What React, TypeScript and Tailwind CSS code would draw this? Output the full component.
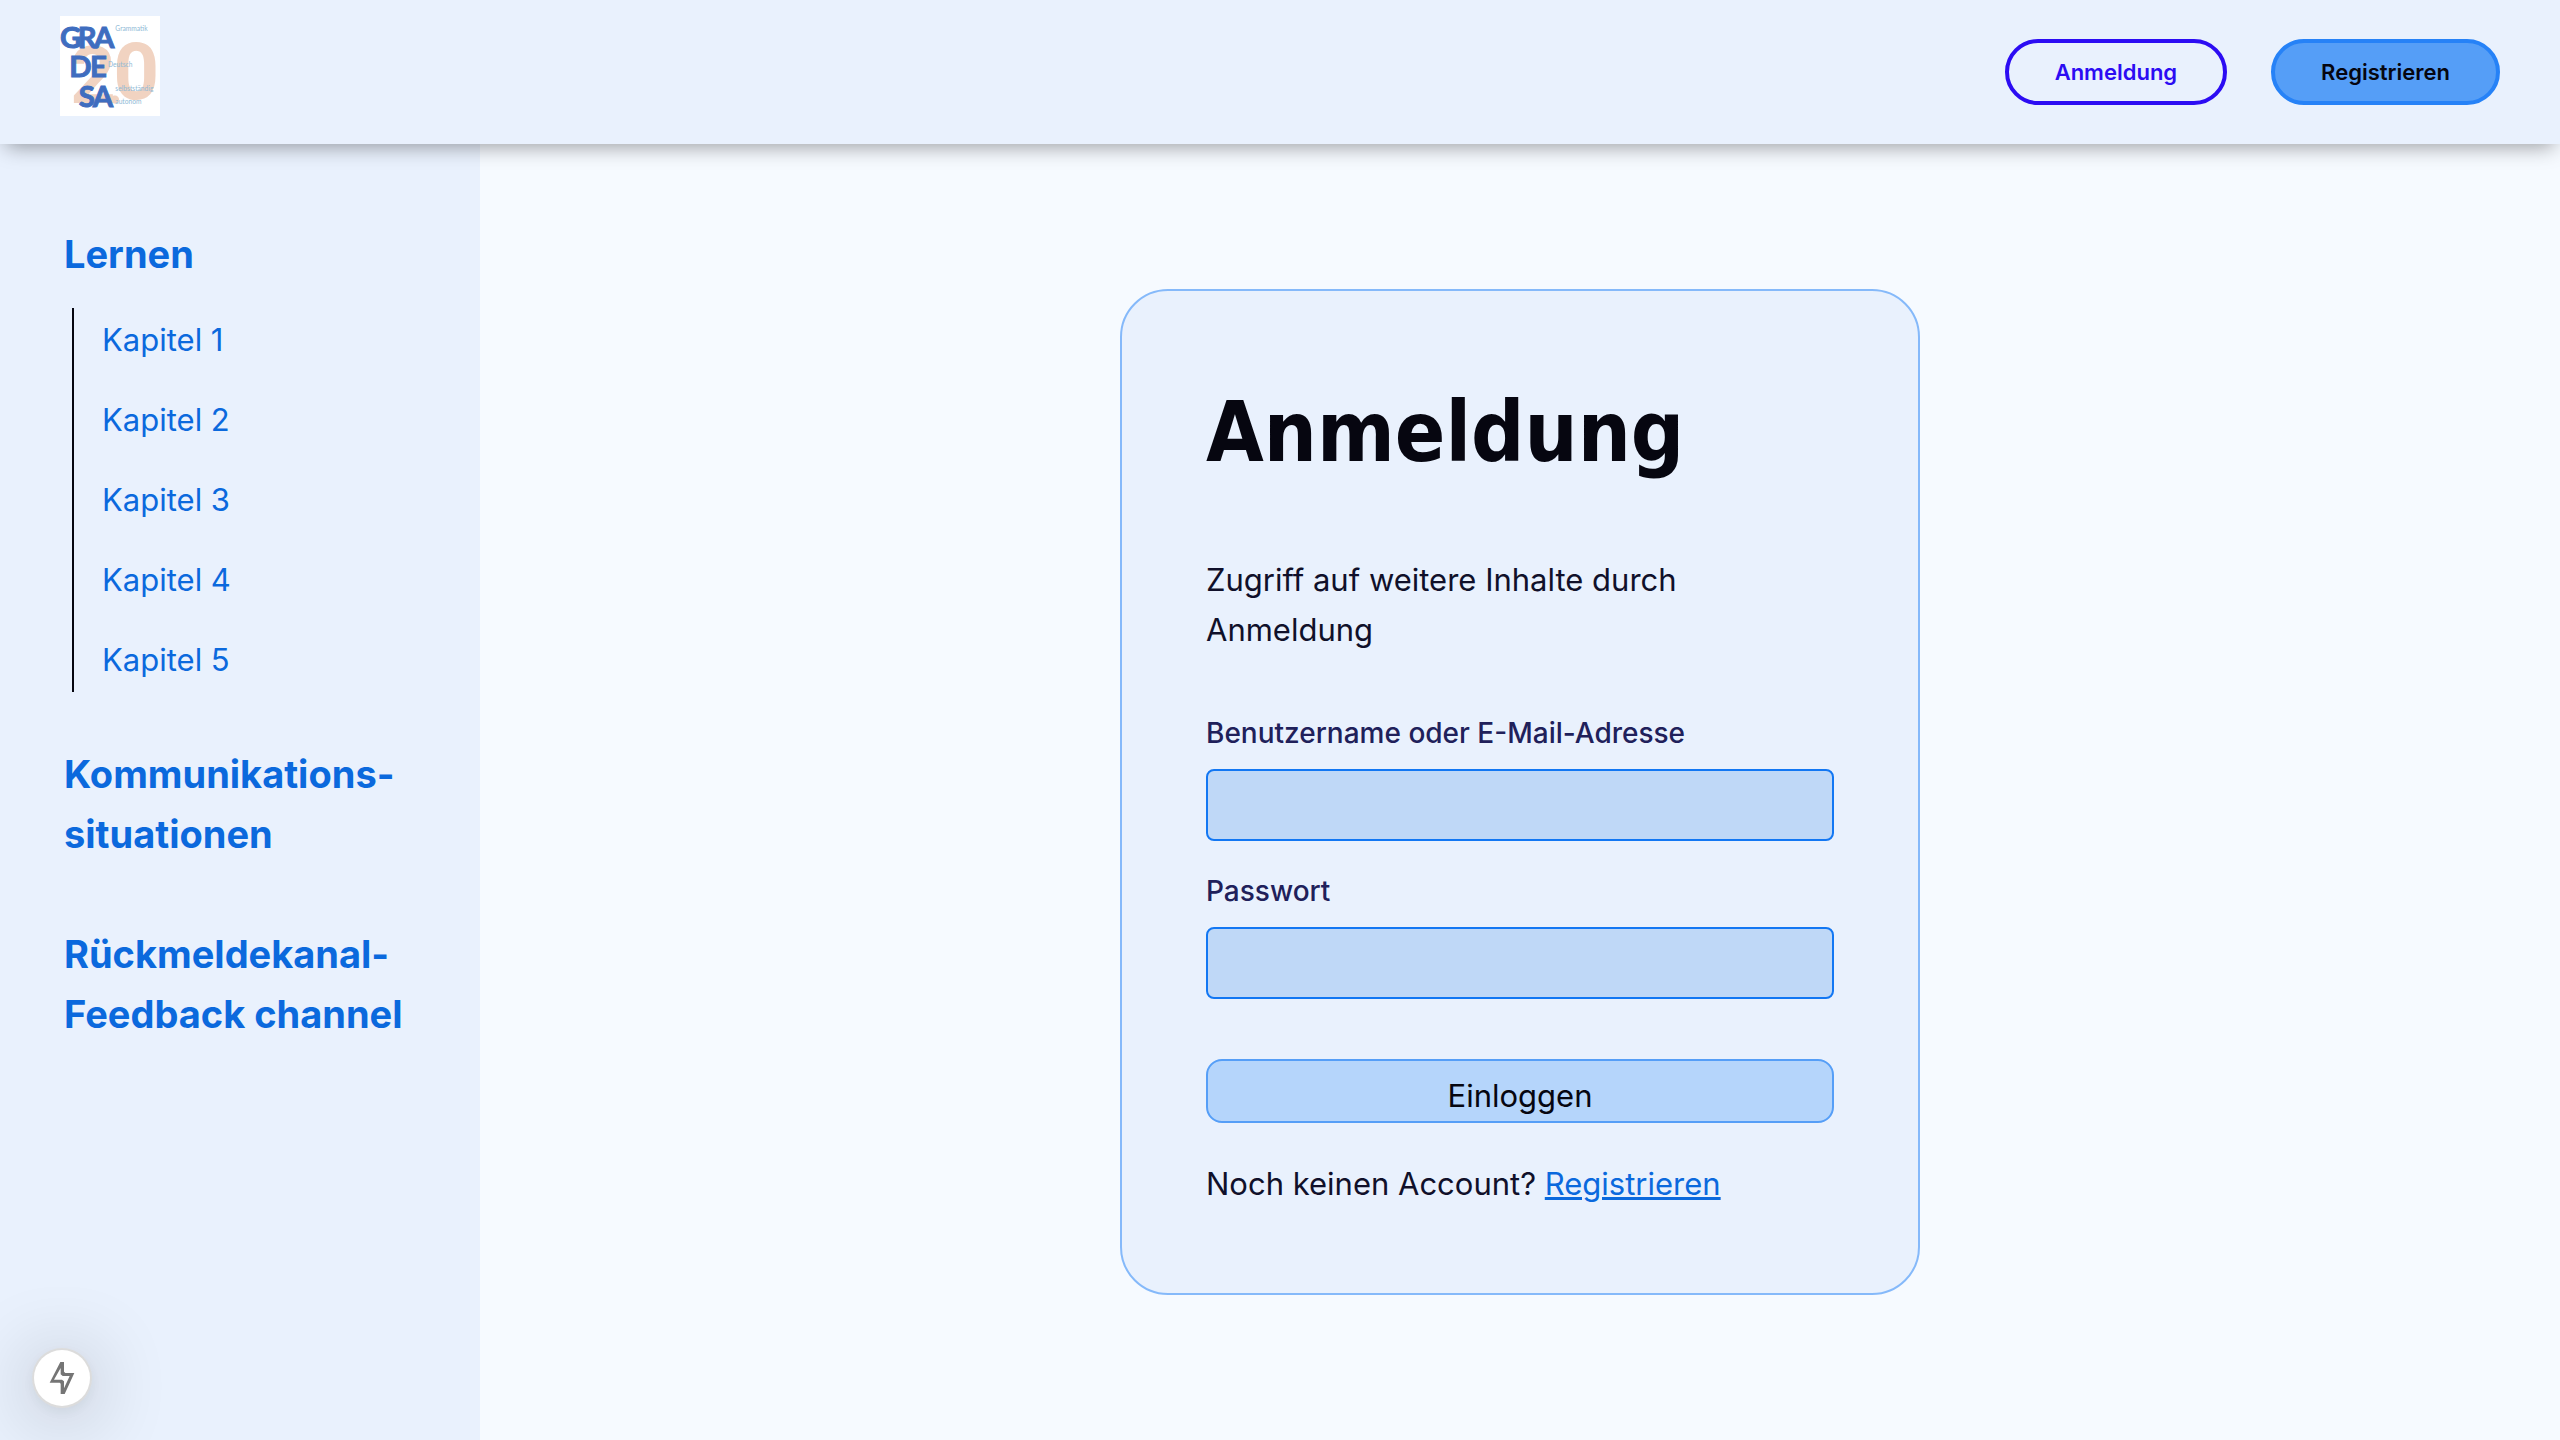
const chapters = ["Kapitel 1", "Kapitel 2", "Kapitel 3", "Kapitel 4", "Kapitel 5"];

function Logo() {
  return (
    <svg viewBox="0 0 300 300" role="img" aria-label="GRADESA 2.0" className="size-[100px] bg-white">
      <g fill="#f1d3c1" fontFamily="'Roboto', sans-serif" fontWeight="700" fontSize="240">
        <text x="30" y="262">2</text>
        <text x="142" y="262" fontSize="160">.</text>
        <text x="160" y="250">0</text>
      </g>
      <g fill="#8fb9d6" fontFamily="'Lato', sans-serif" fontSize="20">
        <text x="166" y="46">Grammatik</text>
        <text x="144" y="154">Deutsch</text>
        <text x="166" y="226">selbstständig</text>
        <text x="166" y="263">autonom</text>
      </g>
      <g
        fill="#3f6dbf"
        stroke="#3f6dbf"
        strokeWidth="3"
        fontFamily="'Lato', sans-serif"
        fontWeight="700"
        fontSize="88"
      >
        <text x="0 53 102" y="96">GRA</text>
        <text x="28 90" y="184">DE</text>
        <text x="56 98" y="272">SA</text>
      </g>
    </svg>
  );
}

function Header() {
  return (
    <header className="relative z-10 flex h-36 items-center justify-between bg-[#e9f1fd] px-[60px] shadow-[0_8px_20px_-6px_rgba(0,0,0,0.4)]">
      <a href="#start" className="mt-4 self-start">
        <Logo />
      </a>
      <div className="flex gap-11 text-[22px] leading-[30px] font-semibold">
        <button type="button" className="rounded-full border-4 border-[#2c0cf3] px-[46px] py-3.5 text-[#2c0cf3]">
          Anmeldung
        </button>
        <button
          type="button"
          className="rounded-full border-4 border-[#2682f7] bg-[#559ef7] px-[46px] py-3.5 text-[#060610]"
        >
          Registrieren
        </button>
      </div>
    </header>
  );
}

function Sidebar() {
  return (
    <nav className="w-[480px] shrink-0 bg-[#e9f1fd] px-16 pt-20 text-[#0b69dd]">
      <a href="#lernen" className="block text-[38px] leading-[60px] font-bold">
        Lernen
      </a>
      <ul className="mt-6 ml-2 flex flex-col gap-8 border-l-2 border-[#060610] py-2 pl-7 text-[31px] leading-[48px]">
        {chapters.map((chapter) => (
          <li key={chapter}>
            <a href="#kapitel">{chapter}</a>
          </li>
        ))}
      </ul>
      <a href="#kommunikation" className="mt-13 block text-[38px] leading-[60px] font-bold">
        Kommunikations-
        <br />
        situationen
      </a>
      <a href="#feedback" className="mt-15 block text-[38px] leading-[60px] font-bold whitespace-nowrap">
        Rückmeldekanal-
        <br />
        Feedback channel
      </a>
    </nav>
  );
}

function Field({ id, label, type }: { id: string; label: string; type: string }) {
  return (
    <div className="flex flex-col gap-3.5">
      <label htmlFor={id} className="text-[28px] leading-[44px] font-medium text-[#20205a]">
        {label}
      </label>
      <input
        id={id}
        type={type}
        className="h-[72px] w-full rounded-lg border-2 border-[#1277f3] bg-[#bfd8f7] px-4 text-[28px] outline-none"
      />
    </div>
  );
}

function LoginCard() {
  return (
    <form
      onSubmit={(event) => event.preventDefault()}
      className="w-[800px] rounded-[48px] border-2 border-[#85b9fa] bg-[#e9f1fd] px-[84px] pt-[92px] pb-[84px] text-[31px] leading-[50px] text-[#10102a]"
    >
      <h1 className="font-['DejaVu_Sans_Condensed',sans-serif] text-[83px] leading-[100px] font-bold text-[#060610]">
        Anmeldung
      </h1>
      <p className="mt-18">
        Zugriff auf weitere Inhalte durch
        <br />
        Anmeldung
      </p>
      <div className="mt-14 flex flex-col gap-7">
        <Field id="username" label="Benutzername oder E-Mail-Adresse" type="text" />
        <Field id="password" label="Passwort" type="password" />
      </div>
      <button
        type="submit"
        className="mt-15 block h-16 w-full rounded-2xl border-2 border-[#559ef7] bg-[#b5d5fb] pt-2.5 text-[#060610]"
      >
        Einloggen
      </button>
      <p className="mt-9">
        Noch keinen Account?{" "}
        <a href="#registrieren" className="text-[#0b69dd] underline">
          Registrieren
        </a>
      </p>
    </form>
  );
}

function DevIndicator() {
  return (
    <button
      type="button"
      aria-label="Entwicklerwerkzeuge"
      className="fixed bottom-[34px] left-[34px] z-20 flex size-14 items-center justify-center rounded-full bg-white shadow-[0_0_0_2px_#dcdcdc,0_4px_16px_rgba(0,0,0,0.08),0_8px_80px_rgba(0,0,0,0.32)]"
    >
      <svg viewBox="72 60 108 108" className="size-9" fill="#757575" fillRule="evenodd">
        <path d="M121 66H132V95L136 99H163L134 162H122V131L119 128H89ZM122 84V103L128 108H149L132 145V124L126 119H102Z" />
      </svg>
    </button>
  );
}

export default function App() {
  return (
    <div className="flex min-h-screen flex-col bg-[#f6faff] font-['Inter',sans-serif]">
      <Header />
      <div className="flex flex-1">
        <Sidebar />
        <main className="flex flex-1 items-center justify-center">
          <LoginCard />
        </main>
      </div>
      <DevIndicator />
    </div>
  );
}
